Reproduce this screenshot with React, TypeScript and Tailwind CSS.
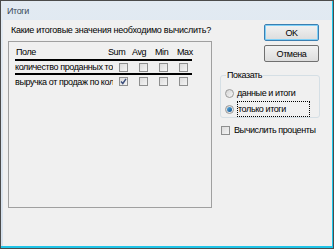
import React from "react";

const font = { fontFamily: '"Liberation Sans", Arial, sans-serif' };

function Check({ checked = false }: { checked?: boolean }) {
  return (
    <span className="relative inline-block w-[9px] h-[9px] border border-[#8e8f8f] bg-gradient-to-br from-[#dcdcdc] to-[#f4f4f4] shrink-0">
      {checked && (
        <svg viewBox="0 0 9 9" className="absolute -left-[1px] -top-[1px] w-[9px] h-[9px]">
          <path d="M2 4.5 L3.8 6.5 L7 1.8" fill="none" stroke="#3b4e7c" strokeWidth="1.4" />
        </svg>
      )}
    </span>
  );
}

function Radio({ checked = false }: { checked?: boolean }) {
  return (
    <span className="relative inline-flex items-center justify-center w-[9px] h-[9px] rounded-full border border-[#9a9a9a] bg-gradient-to-br from-[#d4d4d4] to-[#f6f6f6] shrink-0">
      {checked && <span className="w-[5px] h-[5px] rounded-full bg-gradient-to-br from-[#5fb2e6] to-[#0b4f8a]" />}
    </span>
  );
}

export default function App() {
  const rows = ["количество проданных товаров", "выручка от продаж по количеству"];
  return (
    <div
      className="w-[334px] h-[249px] bg-[#4b4b4b] p-[1px] text-[9px] leading-[12px] tracking-[-0.4px] whitespace-nowrap text-black"
      style={font}
    >
      <div className="h-full flex flex-col bg-gradient-to-b from-[#e2eaf2] to-[#d6e1ed] border-r border-b-2 border-[#1fc4e8]">
        {/* Заголовок окна */}
        <div className="h-[19px] flex items-center pl-[6px] text-[#3c4a5a]">Итоги</div>

        {/* Клиентская область */}
        <div className="flex-1 ml-[2px] bg-[#f0f0f0] flex">
          {/* Левая колонка */}
          <div className="w-[214px] shrink-0 pl-[5px]">
            <div className="h-[21px] flex items-center pl-[3px] pb-[1px] tracking-[-0.25px]">
              Какие итоговые значения необходимо вычислить?
            </div>
            <div className="w-[204px] h-[167px] border border-[#a0a0a0] pt-[4px] pl-[6px]">
              <div className="flex h-[13px] items-start">
                <span className="w-[93px] pl-[1px]">Поле</span>
                <span className="w-[24px]">Sum</span>
                <span className="w-[23px]">Avg</span>
                <span className="w-[22px]">Min</span>
                <span>Max</span>
              </div>
              {rows.map((r, i) => (
                <div key={r}>
                  <div className="w-[177px] h-[2px] bg-black" />
                  <div className={`flex items-center ${i === 0 ? "h-[12px]" : "h-[13px]"}`}>
                    <span className="w-[104px] flex">
                      <span className="w-[98px] overflow-hidden">{r}</span>
                    </span>
                    {[0, 1, 2, 3].map((c) => (
                      <span key={c} className="w-[20px] flex">
                        <Check checked={i === 1 && c === 0} />
                      </span>
                    ))}
                  </div>
                </div>
              ))}
            </div>
          </div>

          {/* Правая колонка */}
          <div className="w-[100px] shrink-0 ml-[3px] pt-[4px]">
            <button className="ml-[44px] w-[55px] h-[17px] border border-[#3c7fb1] rounded-[2px] bg-gradient-to-b from-[#f2f2f2] to-[#dddddd] shadow-[inset_0_0_0_1px_#7fd0f7] flex items-center justify-center">
              OK
            </button>
            <button className="mt-[4px] ml-[44px] w-[55px] h-[17px] border border-[#707070] rounded-[2px] bg-gradient-to-b from-[#f2f2f2] to-[#dddddd] flex items-center justify-center">
              Отмена
            </button>

            <div className="relative mt-[13px] w-[100px] border border-[#d5dfe5] rounded-[3px] pt-[9px] pl-[4px]">
              <span className="absolute -top-[7px] left-[5px] px-[1px] bg-[#f0f0f0]">Показать</span>
              <div className="h-[16px] flex items-center gap-[3px]">
                <Radio />
                <span>данные и итоги</span>
              </div>
              <div className="h-[16px] flex items-center gap-[3px]">
                <Radio checked />
                <span className="w-[73px] h-[16px] flex items-center border border-dotted border-black">
                  только итоги
                </span>
              </div>
            </div>

            <div className="mt-[5px] h-[14px] flex items-center gap-[4px] pl-[1px]">
              <Check />
              <span>Вычислить проценты</span>
            </div>
          </div>
        </div>
      </div>
    </div>
  );
}
